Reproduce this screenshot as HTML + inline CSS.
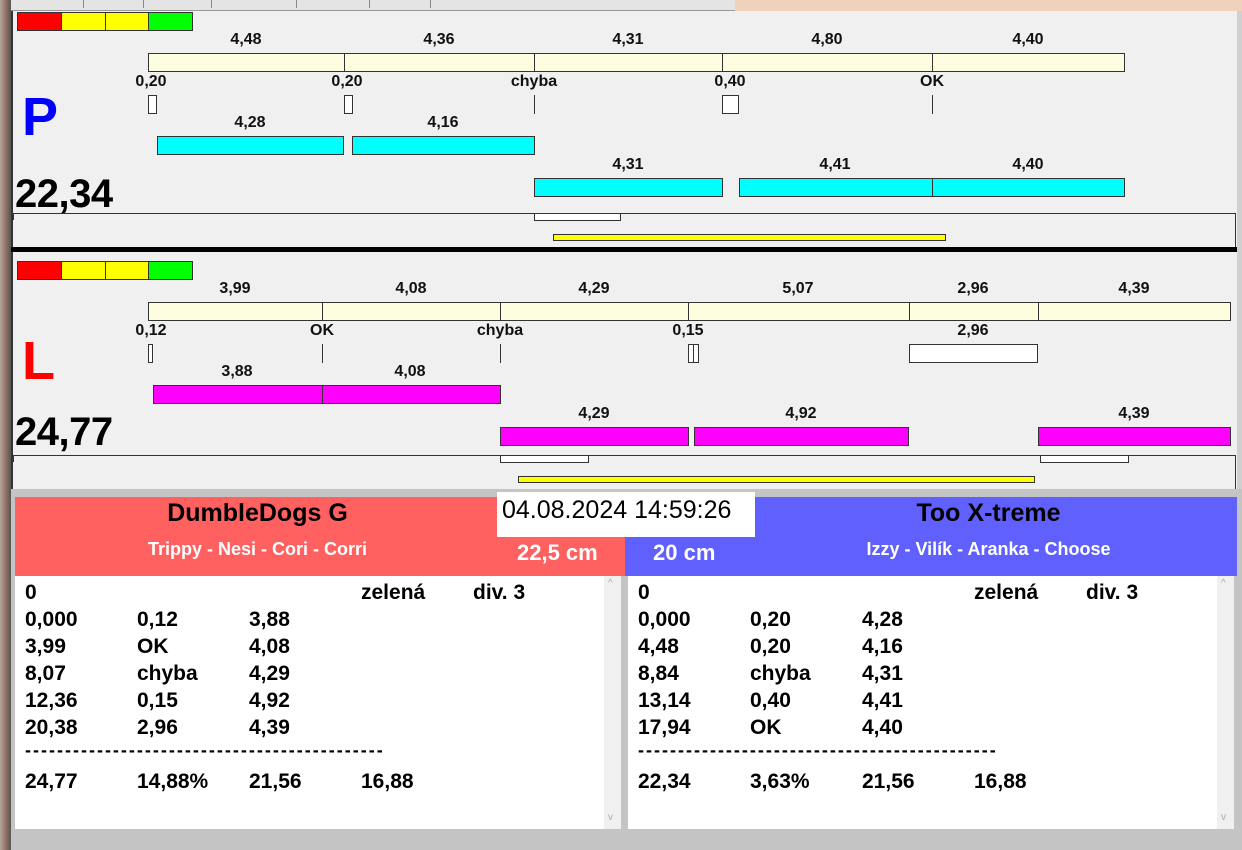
<!DOCTYPE html>
<html><head><meta charset="utf-8"><style>
*{margin:0;padding:0;box-sizing:border-box}
body{width:1242px;height:850px;position:relative;overflow:hidden;background:#c8c8c8;font-family:"Liberation Sans",Arial,sans-serif}
.a{position:absolute}
.lb{position:absolute;font-weight:bold;font-size:16px;transform:translateX(-50%);white-space:nowrap;color:#111}
.bar{position:absolute;background:#fdfde0;border:1px solid #333}
.cy{position:absolute;background:#00ffff;border:1px solid #333}
.mg{position:absolute;background:#ff00ff;border:1px solid #333}
.wb{position:absolute;background:#fff;border:1px solid #333}
.vl{position:absolute;width:1px;background:#333}
.yl{position:absolute;background:#ffff00;border:1px solid #333}
.t{position:absolute;font-weight:bold;font-size:21px;color:#000;white-space:nowrap;margin-top:2px}
</style></head><body>
<div class="a" style="left:0;top:0;width:735px;height:11px;background:#e4e4e4;border-bottom:1px solid #999"></div>
<div class="a" style="left:735px;top:0;width:507px;height:11px;background:#f0d2bc"></div>
<div class="a" style="left:83px;top:0;width:1px;height:8px;background:#888"></div>
<div class="a" style="left:143px;top:0;width:1px;height:8px;background:#888"></div>
<div class="a" style="left:211px;top:0;width:1px;height:8px;background:#888"></div>
<div class="a" style="left:296px;top:0;width:1px;height:8px;background:#888"></div>
<div class="a" style="left:369px;top:0;width:1px;height:8px;background:#888"></div>
<div class="a" style="left:430px;top:0;width:1px;height:8px;background:#888"></div>
<div class="a" style="left:0;top:0;width:11px;height:850px;background:linear-gradient(90deg,#b9a59a,#8a6a60 60%,#555 100%)"></div>
<div class="a" style="left:11px;top:11px;width:1226px;height:478px;background:#f0f0f0;border-left:2px solid #333"></div>
<div class="a" style="left:1237px;top:11px;width:5px;height:478px;background:#d0d0d0"></div>

<div class="a" style="left:17px;top:12px;width:176px;height:19px;border:1px solid #333;display:flex">
<div style="flex:1;background:#f00;border-right:1px solid #333"></div><div style="flex:1;background:#ff0;border-right:1px solid #333"></div><div style="flex:1;background:#ff0;border-right:1px solid #333"></div><div style="flex:1;background:#0f0"></div></div>
<div class="lb" style="left:246px;top:31px">4,48</div><div class="lb" style="left:439px;top:31px">4,36</div><div class="lb" style="left:628px;top:31px">4,31</div><div class="lb" style="left:827px;top:31px">4,80</div><div class="lb" style="left:1028px;top:31px">4,40</div>
<div class="bar" style="left:148px;top:53px;width:197px;height:19px"></div><div class="bar" style="left:344px;top:53px;width:191px;height:19px"></div><div class="bar" style="left:534px;top:53px;width:189px;height:19px"></div><div class="bar" style="left:722px;top:53px;width:211px;height:19px"></div><div class="bar" style="left:932px;top:53px;width:193px;height:19px"></div>
<div class="lb" style="left:151px;top:73px">0,20</div><div class="lb" style="left:347px;top:73px">0,20</div><div class="lb" style="left:534px;top:73px">chyba</div><div class="lb" style="left:730px;top:73px">0,40</div><div class="lb" style="left:932px;top:73px">OK</div>
<div class="wb" style="left:148px;top:95px;width:9px;height:19px"></div><div class="wb" style="left:344px;top:95px;width:9px;height:19px"></div><div class="vl" style="left:534px;top:95px;height:19px"></div><div class="wb" style="left:722px;top:95px;width:17px;height:19px"></div><div class="vl" style="left:932px;top:95px;height:19px"></div>
<div class="a" style="left:22px;top:86px;font-size:54px;font-weight:bold;color:#0000ff">P</div>
<div class="lb" style="left:250px;top:114px">4,28</div><div class="lb" style="left:443px;top:114px">4,16</div>
<div class="cy" style="left:157px;top:136px;width:187px;height:19px"></div><div class="cy" style="left:352px;top:136px;width:183px;height:19px"></div>
<div class="lb" style="left:628px;top:156px">4,31</div><div class="lb" style="left:835px;top:156px">4,41</div><div class="lb" style="left:1028px;top:156px">4,40</div>
<div class="cy" style="left:534px;top:178px;width:189px;height:19px"></div><div class="cy" style="left:739px;top:178px;width:194px;height:19px"></div><div class="cy" style="left:932px;top:178px;width:193px;height:19px"></div>
<div class="a" style="left:15px;top:172px;font-size:40px;font-weight:bold;letter-spacing:-0.5px">22,34</div>
<div class="a" style="left:12px;top:213px;width:1224px;height:35px;border-top:1px solid #333;border-right:1px solid #333"></div>
<div class="vl" style="left:13px;top:213px;height:7px"></div>
<div class="wb" style="left:534px;top:213px;width:87px;height:8px"></div>
<div class="yl" style="left:553px;top:234px;width:393px;height:7px"></div>
<div class="a" style="left:11px;top:247px;width:1226px;height:5px;background:#000"></div>

<div class="a" style="left:17px;top:261px;width:176px;height:19px;border:1px solid #333;display:flex">
<div style="flex:1;background:#f00;border-right:1px solid #333"></div><div style="flex:1;background:#ff0;border-right:1px solid #333"></div><div style="flex:1;background:#ff0;border-right:1px solid #333"></div><div style="flex:1;background:#0f0"></div></div>
<div class="lb" style="left:235px;top:280px">3,99</div><div class="lb" style="left:411px;top:280px">4,08</div><div class="lb" style="left:594px;top:280px">4,29</div><div class="lb" style="left:798px;top:280px">5,07</div><div class="lb" style="left:973px;top:280px">2,96</div><div class="lb" style="left:1134px;top:280px">4,39</div>
<div class="bar" style="left:148px;top:302px;width:175px;height:19px"></div><div class="bar" style="left:322px;top:302px;width:179px;height:19px"></div><div class="bar" style="left:500px;top:302px;width:189px;height:19px"></div><div class="bar" style="left:688px;top:302px;width:222px;height:19px"></div><div class="bar" style="left:909px;top:302px;width:130px;height:19px"></div><div class="bar" style="left:1038px;top:302px;width:193px;height:19px"></div>
<div class="lb" style="left:151px;top:322px">0,12</div><div class="lb" style="left:322px;top:322px">OK</div><div class="lb" style="left:500px;top:322px">chyba</div><div class="lb" style="left:688px;top:322px">0,15</div><div class="lb" style="left:973px;top:322px">2,96</div>
<div class="wb" style="left:148px;top:344px;width:5px;height:19px"></div><div class="vl" style="left:322px;top:344px;height:19px"></div><div class="vl" style="left:500px;top:344px;height:19px"></div><div class="wb" style="left:688px;top:344px;width:11px;height:19px"></div><div class="vl" style="left:693px;top:344px;height:19px"></div><div class="wb" style="left:909px;top:344px;width:129px;height:19px"></div>
<div class="a" style="left:22px;top:330px;font-size:54px;font-weight:bold;color:#ff0000">L</div>
<div class="lb" style="left:237px;top:363px">3,88</div><div class="lb" style="left:410px;top:363px">4,08</div>
<div class="mg" style="left:153px;top:385px;width:170px;height:19px"></div><div class="mg" style="left:322px;top:385px;width:179px;height:19px"></div>
<div class="lb" style="left:594px;top:405px">4,29</div><div class="lb" style="left:801px;top:405px">4,92</div><div class="lb" style="left:1134px;top:405px">4,39</div>
<div class="mg" style="left:500px;top:427px;width:189px;height:19px"></div><div class="mg" style="left:694px;top:427px;width:215px;height:19px"></div><div class="mg" style="left:1038px;top:427px;width:193px;height:19px"></div>
<div class="a" style="left:15px;top:410px;font-size:40px;font-weight:bold;letter-spacing:-0.5px">24,77</div>
<div class="a" style="left:12px;top:455px;width:1224px;height:34px;border-top:1px solid #333;border-right:1px solid #333"></div>
<div class="vl" style="left:13px;top:455px;height:7px"></div>
<div class="wb" style="left:500px;top:455px;width:89px;height:8px"></div><div class="wb" style="left:1040px;top:455px;width:89px;height:8px"></div>
<div class="yl" style="left:518px;top:476px;width:517px;height:7px"></div>

<div class="a" style="left:11px;top:489px;width:1231px;height:361px;background:#c4c4c4"></div>
<div class="a" style="left:15px;top:497px;width:610px;height:79px;background:#ff6060"></div>
<div class="a" style="left:625px;top:497px;width:612px;height:79px;background:#6060ff"></div>
<div class="a" style="left:15px;top:499px;width:485px;text-align:center;font-size:25px;font-weight:bold">DumbleDogs G</div>
<div class="a" style="left:15px;top:539px;width:485px;text-align:center;font-size:18px;font-weight:bold;color:#fff">Trippy - Nesi - Cori - Corri</div>
<div class="a" style="left:497px;top:492px;width:258px;height:45px;background:#fff;font-size:25px;padding:4px 0 0 5px">04.08.2024 14:59:26</div>
<div class="a" style="left:517px;top:540px;font-size:22px;font-weight:bold;color:#fff">22,5 cm</div>
<div class="a" style="left:653px;top:540px;font-size:22px;font-weight:bold;color:#fff">20 cm</div>
<div class="a" style="left:755px;top:499px;width:467px;text-align:center;font-size:25px;font-weight:bold">Too X-treme</div>
<div class="a" style="left:755px;top:539px;width:467px;text-align:center;font-size:18px;font-weight:bold;color:#fff">Izzy - Vilík - Aranka - Choose</div>

<div class="a" style="left:15px;top:576px;width:606px;height:253px;background:#fff"></div>
<div class="a" style="left:604px;top:576px;width:17px;height:253px;background:#f0f0f0"></div>
<div class="a" style="left:608px;top:578px;font-size:10px;color:#aaa">^</div><div class="a" style="left:608px;top:812px;font-size:10px;color:#aaa">v</div>
<div class="a" style="left:628px;top:576px;width:606px;height:253px;background:#fff"></div>
<div class="a" style="left:1217px;top:576px;width:17px;height:253px;background:#f0f0f0"></div>
<div class="a" style="left:1221px;top:578px;font-size:10px;color:#aaa">^</div><div class="a" style="left:1221px;top:812px;font-size:10px;color:#aaa">v</div>

<div class="t" style="left:25px;top:579px">0</div><div class="t" style="left:361px;top:579px">zelená</div><div class="t" style="left:473px;top:579px">div. 3</div>
<div class="t" style="left:25px;top:606px">0,000</div><div class="t" style="left:137px;top:606px">0,12</div><div class="t" style="left:249px;top:606px">3,88</div>
<div class="t" style="left:25px;top:633px">3,99</div><div class="t" style="left:137px;top:633px">OK</div><div class="t" style="left:249px;top:633px">4,08</div>
<div class="t" style="left:25px;top:660px">8,07</div><div class="t" style="left:137px;top:660px">chyba</div><div class="t" style="left:249px;top:660px">4,29</div>
<div class="t" style="left:25px;top:687px">12,36</div><div class="t" style="left:137px;top:687px">0,15</div><div class="t" style="left:249px;top:687px">4,92</div>
<div class="t" style="left:25px;top:714px">20,38</div><div class="t" style="left:137px;top:714px">2,96</div><div class="t" style="left:249px;top:714px">4,39</div>
<div class="t" style="left:25px;top:738px;font-size:18px;letter-spacing:2px">---------------------------------------------</div>
<div class="t" style="left:25px;top:768px">24,77</div><div class="t" style="left:137px;top:768px">14,88%</div><div class="t" style="left:249px;top:768px">21,56</div><div class="t" style="left:361px;top:768px">16,88</div>

<div class="t" style="left:638px;top:579px">0</div><div class="t" style="left:974px;top:579px">zelená</div><div class="t" style="left:1086px;top:579px">div. 3</div>
<div class="t" style="left:638px;top:606px">0,000</div><div class="t" style="left:750px;top:606px">0,20</div><div class="t" style="left:862px;top:606px">4,28</div>
<div class="t" style="left:638px;top:633px">4,48</div><div class="t" style="left:750px;top:633px">0,20</div><div class="t" style="left:862px;top:633px">4,16</div>
<div class="t" style="left:638px;top:660px">8,84</div><div class="t" style="left:750px;top:660px">chyba</div><div class="t" style="left:862px;top:660px">4,31</div>
<div class="t" style="left:638px;top:687px">13,14</div><div class="t" style="left:750px;top:687px">0,40</div><div class="t" style="left:862px;top:687px">4,41</div>
<div class="t" style="left:638px;top:714px">17,94</div><div class="t" style="left:750px;top:714px">OK</div><div class="t" style="left:862px;top:714px">4,40</div>
<div class="t" style="left:638px;top:738px;font-size:18px;letter-spacing:2px">---------------------------------------------</div>
<div class="t" style="left:638px;top:768px">22,34</div><div class="t" style="left:750px;top:768px">3,63%</div><div class="t" style="left:862px;top:768px">21,56</div><div class="t" style="left:974px;top:768px">16,88</div>
</body></html>
